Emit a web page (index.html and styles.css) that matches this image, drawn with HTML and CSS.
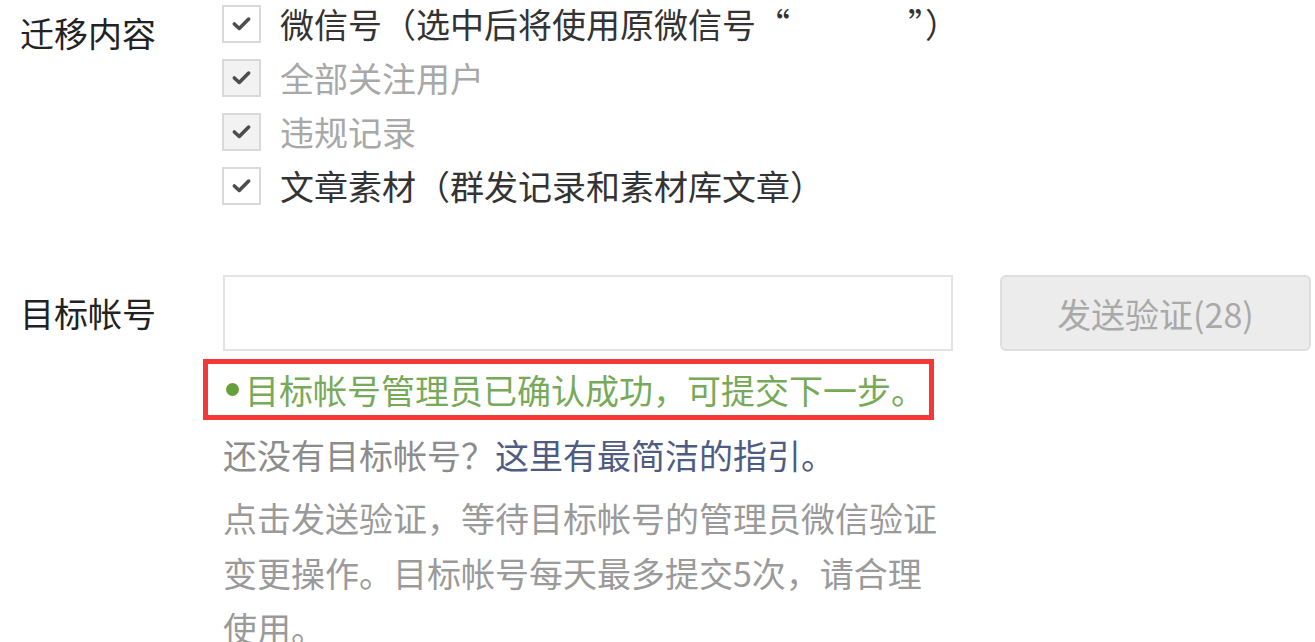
FILE: index.html
```html
<!DOCTYPE html>
<html lang="zh-CN">
<head>
    <meta charset="UTF-8">
    <title>迁移设置</title>
    <link rel="stylesheet" href="styles.css">
</head>
<body>
    <div class="form">
        <!-- 迁移内容 -->
        <div class="row row-migrate">
            <div class="label label-top">迁移内容</div>
            <ul class="options">
                <li class="option">
                    <span class="check"><svg viewBox="0 0 38 38"><path d="M11 19 L16.5 24 L27 13.5"/></svg></span>
                    <span class="option-text">微信号（选中后将使用原微信号“<span class="blank"></span>”）</span>
                </li>
                <li class="option disabled">
                    <span class="check"><svg viewBox="0 0 38 38"><path d="M11 19 L16.5 24 L27 13.5"/></svg></span>
                    <span class="option-text">全部关注用户</span>
                </li>
                <li class="option disabled">
                    <span class="check"><svg viewBox="0 0 38 38"><path d="M11 19 L16.5 24 L27 13.5"/></svg></span>
                    <span class="option-text">违规记录</span>
                </li>
                <li class="option">
                    <span class="check"><svg viewBox="0 0 38 38"><path d="M11 19 L16.5 24 L27 13.5"/></svg></span>
                    <span class="option-text">文章素材（群发记录和素材库文章）</span>
                </li>
            </ul>
        </div>

        <!-- 目标帐号 -->
        <div class="row row-target">
            <div class="label">目标帐号</div>
            <div class="target-body">
                <div class="input-line">
                    <input class="account-input" type="text">
                    <button class="send-btn" disabled>发送验证(28)</button>
                </div>
                <div class="success-box">
                    <span class="dot"></span>目标帐号管理员已确认成功，可提交下一步。
                </div>
                <p class="tip">还没有目标帐号？<a href="#" class="guide">这里有最简洁的指引。</a></p>
                <p class="desc">点击发送验证，等待目标帐号的管理员微信验证变更操作。目标帐号每天最多提交5次，请合理使用。</p>
            </div>
        </div>
    </div>
</body>
</html>
```

FILE: styles.css
```css
body {
    margin: 0;
    padding: 0 0 0 20px;
    background-color: #ffffff;
    font-family: "Noto Sans CJK SC", "Noto Sans", sans-serif;
    font-size: 34px;
    color: #333333;
    overflow: hidden;
}

.row {
    display: flex;
    align-items: flex-start;
}

/* left labels */
.label {
    width: 203px;
    flex-shrink: 0;
    line-height: 54px;
    color: #222222;
}

.label-top {
    padding-top: 6px;
}

/* checkbox list */
.options {
    list-style: none;
    margin: -3px 0 0 0;
    padding: 0;
}

.option {
    display: flex;
    align-items: center;
    height: 54px;
}

.check {
    width: 39px;
    height: 38px;
    box-sizing: border-box;
    border: 2px solid #d9d9d9;
    background-color: #ffffff;
    margin-left: -1px;
    margin-right: 19px;
    display: flex;
}

.check svg {
    width: 100%;
    height: 100%;
    fill: none;
    stroke: #4d4d4d;
    stroke-width: 4;
    stroke-linecap: round;
    stroke-linejoin: round;
}

.option-text {
    line-height: 54px;
    white-space: nowrap;
}

.option.disabled .check {
    background-color: #f2f2f2;
}

.option.disabled .option-text {
    color: #a8a8a8;
}

.blank {
    display: inline-block;
    width: 118px;
}

/* target account */
.row-target {
    margin-top: 62px;
}

.row-target .label {
    line-height: 76px;
}

.target-body {
    display: flex;
    flex-direction: column;
}

.input-line {
    display: flex;
    gap: 47px;
}

.account-input {
    width: 730px;
    height: 76px;
    box-sizing: border-box;
    border: 2px solid #e3e3e3;
    background: #ffffff;
    outline: none;
}

.send-btn {
    width: 311px;
    height: 76px;
    box-sizing: border-box;
    border: 2px solid #dedede;
    border-radius: 6px;
    background-color: #ececec;
    color: #a9a9a9;
    font-family: "Noto Sans CJK SC", "Noto Sans", sans-serif;
    font-size: 34px;
    padding: 0;
}

/* highlighted success message */
.success-box {
    margin: 8px 0 0 -20px;
    width: 731px;
    height: 61px;
    box-sizing: border-box;
    border: 5px solid #f43838;
    padding-left: 18px;
    line-height: 51px;
    color: #77aa58;
    display: flex;
    align-items: center;
}

.dot {
    width: 13px;
    height: 13px;
    border-radius: 50%;
    background-color: #66a03a;
    margin-right: 6px;
    flex-shrink: 0;
}

.tip {
    margin: 10px 0 0 0;
    line-height: 50px;
    color: #8c8c8c;
}

.guide {
    color: #4f5c82;
    text-decoration: none;
}

.desc {
    margin: 10px 0 0 0;
    width: 724px;
    line-height: 55px;
    color: #9a9a9a;
}
```
